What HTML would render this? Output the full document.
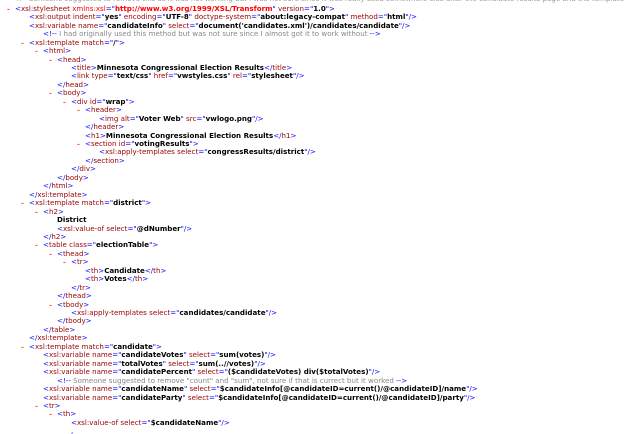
<!DOCTYPE html>
<html><head><meta charset="utf-8"><style>
html,body{margin:0;padding:0;background:#fff;width:630px;height:434px;overflow:hidden}
body{position:relative;font-family:"DejaVu Sans","Liberation Sans",sans-serif;font-size:7.1px;color:#000}
.l{position:absolute;white-space:nowrap;line-height:8.5px;height:8.5px}
.m{color:#0000ff}.t{color:#990000}.ns{color:#ff0000}.x{font-weight:bold}.ci{color:#888}
.k{position:absolute;color:#ff0000;font-family:"Liberation Sans",sans-serif;font-size:9px}
.top{position:absolute;top:-6px;left:8px;color:#999;white-space:nowrap;font-size:7.1px}
</style></head><body>
<div class="top">- &lt;!-- Someone suggested to remove this as it was not working but I was not sure since it was really used somewhere else after the candidate results page and the template --&gt;</div>
<div id="c"></div>
<script>
var L=[
[0,1,'<span class="m">&lt;</span><span class="t">xsl:stylesheet</span> <span class="ns">xmlns:xsl</span><span class="m">="</span><span class="ns x">http://www.w3.org/1999/XSL/Transform</span><span class="m">"</span><span class="t"> version</span><span class="m">="</span><b>1.0</b><span class="m">"&gt;</span>'],
[1,0,'<span class="m">&lt;</span><span class="t">xsl:output</span><span class="t"> indent</span><span class="m">="</span><b>yes</b><span class="m">"</span><span class="t"> encoding</span><span class="m">="</span><b>UTF-8</b><span class="m">"</span><span class="t"> doctype-system</span><span class="m">="</span><b>about:legacy-compat</b><span class="m">"</span><span class="t"> method</span><span class="m">="</span><b>html</b><span class="m">"/&gt;</span>'],
[1,0,'<span class="m">&lt;</span><span class="t">xsl:variable</span><span class="t"> name</span><span class="m">="</span><b>candidateInfo</b><span class="m">"</span><span class="t"> select</span><span class="m">="</span><b>document(\'candidates.xml\')/candidates/candidate</b><span class="m">"/&gt;</span>'],
[2,0,'<span class="m">&lt;!--</span><span class="ci"> I had originally used this method but was not sure since I almost got it to work without </span><span class="m">--&gt;</span>'],
[1,1,'<span class="m">&lt;</span><span class="t">xsl:template</span><span class="t"> match</span><span class="m">="</span><b>/</b><span class="m">"&gt;</span>'],
[2,1,'<span class="m">&lt;</span><span class="t">html</span><span class="m">&gt;</span>'],
[3,1,'<span class="m">&lt;</span><span class="t">head</span><span class="m">&gt;</span>'],
[4,0,'<span class="m">&lt;</span><span class="t">title</span><span class="m">&gt;</span><b>Minnesota Congressional Election Results</b><span class="m">&lt;/</span><span class="t">title</span><span class="m">&gt;</span>'],
[4,0,'<span class="m">&lt;</span><span class="t">link</span><span class="t"> type</span><span class="m">="</span><b>text/css</b><span class="m">"</span><span class="t"> href</span><span class="m">="</span><b>vwstyles.css</b><span class="m">"</span><span class="t"> rel</span><span class="m">="</span><b>stylesheet</b><span class="m">"/&gt;</span>'],
[3,0,'<span class="m">&lt;/</span><span class="t">head</span><span class="m">&gt;</span>'],
[3,1,'<span class="m">&lt;</span><span class="t">body</span><span class="m">&gt;</span>'],
[4,1,'<span class="m">&lt;</span><span class="t">div</span><span class="t"> id</span><span class="m">="</span><b>wrap</b><span class="m">"&gt;</span>'],
[5,1,'<span class="m">&lt;</span><span class="t">header</span><span class="m">&gt;</span>'],
[6,0,'<span class="m">&lt;</span><span class="t">img</span><span class="t"> alt</span><span class="m">="</span><b>Voter Web</b><span class="m">"</span><span class="t"> src</span><span class="m">="</span><b>vwlogo.png</b><span class="m">"/&gt;</span>'],
[5,0,'<span class="m">&lt;/</span><span class="t">header</span><span class="m">&gt;</span>'],
[5,0,'<span class="m">&lt;</span><span class="t">h1</span><span class="m">&gt;</span><b>Minnesota Congressional Election Results</b><span class="m">&lt;/</span><span class="t">h1</span><span class="m">&gt;</span>'],
[5,1,'<span class="m">&lt;</span><span class="t">section</span><span class="t"> id</span><span class="m">="</span><b>votingResults</b><span class="m">"&gt;</span>'],
[6,0,'<span class="m">&lt;</span><span class="t">xsl:apply-templates</span><span class="t"> select</span><span class="m">="</span><b>congressResults/district</b><span class="m">"/&gt;</span>'],
[5,0,'<span class="m">&lt;/</span><span class="t">section</span><span class="m">&gt;</span>'],
[4,0,'<span class="m">&lt;/</span><span class="t">div</span><span class="m">&gt;</span>'],
[3,0,'<span class="m">&lt;/</span><span class="t">body</span><span class="m">&gt;</span>'],
[2,0,'<span class="m">&lt;/</span><span class="t">html</span><span class="m">&gt;</span>'],
[1,0,'<span class="m">&lt;/</span><span class="t">xsl:template</span><span class="m">&gt;</span>'],
[1,1,'<span class="m">&lt;</span><span class="t">xsl:template</span><span class="t"> match</span><span class="m">="</span><b>district</b><span class="m">"&gt;</span>'],
[2,1,'<span class="m">&lt;</span><span class="t">h2</span><span class="m">&gt;</span>'],
[3,0,'<b>District</b>'],
[3,0,'<span class="m">&lt;</span><span class="t">xsl:value-of</span><span class="t"> select</span><span class="m">="</span><b>@dNumber</b><span class="m">"/&gt;</span>'],
[2,0,'<span class="m">&lt;/</span><span class="t">h2</span><span class="m">&gt;</span>'],
[2,1,'<span class="m">&lt;</span><span class="t">table</span><span class="t"> class</span><span class="m">="</span><b>electionTable</b><span class="m">"&gt;</span>'],
[3,1,'<span class="m">&lt;</span><span class="t">thead</span><span class="m">&gt;</span>'],
[4,1,'<span class="m">&lt;</span><span class="t">tr</span><span class="m">&gt;</span>'],
[5,0,'<span class="m">&lt;</span><span class="t">th</span><span class="m">&gt;</span><b>Candidate</b><span class="m">&lt;/</span><span class="t">th</span><span class="m">&gt;</span>'],
[5,0,'<span class="m">&lt;</span><span class="t">th</span><span class="m">&gt;</span><b>Votes</b><span class="m">&lt;/</span><span class="t">th</span><span class="m">&gt;</span>'],
[4,0,'<span class="m">&lt;/</span><span class="t">tr</span><span class="m">&gt;</span>'],
[3,0,'<span class="m">&lt;/</span><span class="t">thead</span><span class="m">&gt;</span>'],
[3,1,'<span class="m">&lt;</span><span class="t">tbody</span><span class="m">&gt;</span>'],
[4,0,'<span class="m">&lt;</span><span class="t">xsl:apply-templates</span><span class="t"> select</span><span class="m">="</span><b>candidates/candidate</b><span class="m">"/&gt;</span>'],
[3,0,'<span class="m">&lt;/</span><span class="t">tbody</span><span class="m">&gt;</span>'],
[2,0,'<span class="m">&lt;/</span><span class="t">table</span><span class="m">&gt;</span>'],
[1,0,'<span class="m">&lt;/</span><span class="t">xsl:template</span><span class="m">&gt;</span>'],
[1,1,'<span class="m">&lt;</span><span class="t">xsl:template</span><span class="t"> match</span><span class="m">="</span><b>candidate</b><span class="m">"&gt;</span>'],
[2,0,'<span class="m">&lt;</span><span class="t">xsl:variable</span><span class="t"> name</span><span class="m">="</span><b>candidateVotes</b><span class="m">"</span><span class="t"> select</span><span class="m">="</span><b>sum(votes)</b><span class="m">"/&gt;</span>'],
[2,0,'<span class="m">&lt;</span><span class="t">xsl:variable</span><span class="t"> name</span><span class="m">="</span><b>totalVotes</b><span class="m">"</span><span class="t"> select</span><span class="m">="</span><b>sum(..//votes)</b><span class="m">"/&gt;</span>'],
[2,0,'<span class="m">&lt;</span><span class="t">xsl:variable</span><span class="t"> name</span><span class="m">="</span><b>candidatePercent</b><span class="m">"</span><span class="t"> select</span><span class="m">="</span><b>($candidateVotes) div($totalVotes)</b><span class="m">"/&gt;</span>'],
[3,0,'<span class="m">&lt;!--</span><span class="ci"> Someone suggested to remove "count" and "sum", not sure if that is currect but it worked </span><span class="m">--&gt;</span>'],
[2,0,'<span class="m">&lt;</span><span class="t">xsl:variable</span><span class="t"> name</span><span class="m">="</span><b>candidateName</b><span class="m">"</span><span class="t"> select</span><span class="m">="</span><b>$candidateInfo[@candidateID=current()/@candidateID]/name</b><span class="m">"/&gt;</span>'],
[2,0,'<span class="m">&lt;</span><span class="t">xsl:variable</span><span class="t"> name</span><span class="m">="</span><b>candidateParty</b><span class="m">"</span><span class="t"> select</span><span class="m">="</span><b>$candidateInfo[@candidateID=current()/@candidateID]/party</b><span class="m">"/&gt;</span>'],
[2,1,'<span class="m">&lt;</span><span class="t">tr</span><span class="m">&gt;</span>'],
[3,1,'<span class="m">&lt;</span><span class="t">th</span><span class="m">&gt;</span>'],
[4,0,'<span class="m">&lt;</span><span class="t">xsl:value-of</span><span class="t"> select</span><span class="m">="</span><b>$candidateName</b><span class="m">"/&gt;</span>'],
[4,0,'<span class="m">,</span>']
];
var h='';
for(var i=0;i<L.length;i++){var lv=L[i][0],y=4.8+8.45*i,x=15+14*lv;
if(L[i][1])h+='<div class="k" style="left:'+(x-8)+'px;top:'+(y-1)+'px">-</div>';
h+='<div class="l" style="left:'+x+'px;top:'+y+'px">'+L[i][2]+'</div>';}
document.getElementById('c').innerHTML=h;
</script>
</body></html>
